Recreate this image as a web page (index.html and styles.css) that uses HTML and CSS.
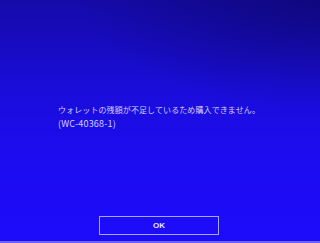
FILE: index.html
```html
<!DOCTYPE html>
<html lang="ja">
<head>
<meta charset="utf-8">
<link rel="stylesheet" href="styles.css">
</head>
<body>
<div class="screen">
  <div class="message">
    <p class="line">ウォレットの残額が不足しているため購入できません。</p>
    <p class="line code">(WC-40368-1)</p>
  </div>
  <div class="actions">
    <button class="ok">OK</button>
  </div>
  <div class="edge"></div>
</div>
</body>
</html>
```

FILE: styles.css
```css
html, body {
  margin: 0;
  padding: 0;
}
body {
  width: 320px;
  height: 243px;
  overflow: hidden;
  font-family: "Noto Sans CJK JP", "Noto Sans", sans-serif;
}
.screen {
  width: 320px;
  height: 243px;
  display: flex;
  flex-direction: column;
  background:
    radial-gradient(ellipse 240px 110px at 320px 0px, rgba(10, 5, 90, 0.55), rgba(10, 5, 90, 0) 100%),
    linear-gradient(to bottom, #150aa8 0%, #1a0dd8 35%, #1c0cf0 65%, #1d0cfa 100%);
}
.message {
  padding: 103px 0 0 58px;
  color: #cfd0ff;
}
.line {
  margin: 0;
  font-size: 8px;
  line-height: 14px;
  letter-spacing: 0.1px;
}
.code {
  font-size: 9px;
  letter-spacing: 0.2px;
}
.actions {
  margin-top: auto;
  display: flex;
  justify-content: center;
  padding-bottom: 6px;
}
.ok {
  width: 120px;
  height: 19px;
  margin-left: -2px;
  background: transparent;
  border: 1px solid #a9a8ff;
  color: #e6e6ff;
  font-family: "Liberation Sans", Arial, sans-serif;
  font-weight: bold;
  font-size: 8px;
  padding: 0;
}
.edge {
  height: 2px;
  background: #6c62ff;
}
```
